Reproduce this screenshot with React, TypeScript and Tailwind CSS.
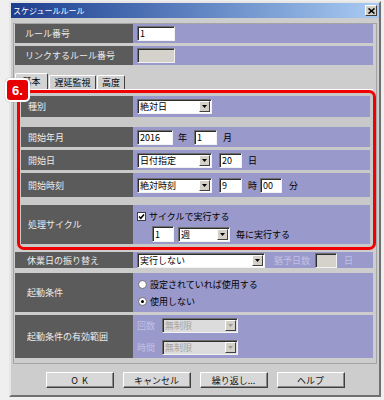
import React from 'react';

type Kids = { children?: React.ReactNode; className?: string };

function Box({ children, className = '', disabled = false }: Kids & { disabled?: boolean }) {
    return (
        <div className={`h-[15px] flex items-center pl-[2px] border border-t-[#6e6e6e] border-l-[#6e6e6e] border-r-[#f2f2f2] border-b-[#f2f2f2] shadow-[inset_1px_1px_0_#2e2e2e] text-black ${disabled ? 'bg-[#d5d2cc]' : 'bg-white'} ${className}`}>
            {children}
        </div>
    );
}

function Arrow({ disabled = false }: { disabled?: boolean }) {
    return (
        <span className="w-[11px] h-[11px] flex items-center justify-center bg-[#d4d0c8] border border-t-white border-l-white border-r-[#404040] border-b-[#404040]">
            <svg width="5" height="3" viewBox="0 0 5 3"><path d="M0 0h5L2.5 3z" fill={disabled ? '#9a9a9a' : '#000'} /></svg>
        </span>
    );
}

function Drop({ value, className = '', disabled = false }: { value: string; className?: string; disabled?: boolean }) {
    return (
        <div className={`h-[15px] flex items-center justify-between pl-[2px] pr-[1px] border border-t-[#6e6e6e] border-l-[#6e6e6e] border-r-[#f2f2f2] border-b-[#f2f2f2] shadow-[inset_1px_1px_0_#2e2e2e] ${disabled ? 'bg-[#dcdcdc] text-[#a4a4a4]' : 'bg-white text-black'} ${className}`}>
            <span>{value}</span>
            <Arrow disabled={disabled} />
        </div>
    );
}

function Row({ label, inner = false, className = '', children, pad = 'pl-[12px]' }: Kids & { label: string; inner?: boolean; pad?: string }) {
    return (
        <div className={`flex ${className}`}>
            <div className={`${inner ? 'w-[112px] pl-[7px]' : `w-[118px] ${pad}`} shrink-0 bg-[#5b5b5b] text-[#ececec] flex items-center`}>{label}</div>
            <div className="flex-1 bg-[#9999cc] pl-[4px] flex items-center text-black">{children}</div>
        </div>
    );
}

function Radio({ on = false, label }: { on?: boolean; label: string }) {
    return (
        <div className="flex items-center gap-[3px]">
            <span className="w-[9px] h-[9px] rounded-full bg-white border border-[#6e6e6e] flex items-center justify-center">
                {on && <span className="w-[3px] h-[3px] rounded-full bg-black" />}
            </span>
            <span>{label}</span>
        </div>
    );
}

function Btn({ children }: Kids) {
    return (
        <div className="w-[68px] h-[16px] bg-[#d8d8d8] border border-t-white border-l-white border-r-[#404040] border-b-[#404040] shadow-[inset_-1px_-1px_0_#8a8a8a] flex items-center justify-center text-[#111]">
            {children}
        </div>
    );
}

export default function App() {
    return (
        <div className="relative w-[384px] h-[400px] bg-[#efefef] overflow-hidden pt-[1px] pl-[9px] text-[9px] leading-none [font-family:'Noto_Sans_CJK_JP',sans-serif]">
            <div className="w-[372px] h-[396px] bg-[#cdcdcd] border-2 border-t-[#e6e6e6] border-l-[#e6e6e6] border-r-[#707070] border-b-[#707070] flex flex-col">
                {/* title bar */}
                <div className="h-[15px] flex items-center justify-between bg-gradient-to-r from-[#1d3d8f] to-[#aacbf2] pl-[2px] pr-[2px]">
                    <span className="text-white text-[8px]">スケジュールルール</span>
                    <span className="w-[12px] h-[11px] bg-[#d4d0c8] border border-t-white border-l-white border-r-[#404040] border-b-[#404040] flex items-center justify-center">
                        <svg width="7" height="6" viewBox="0 0 7 6"><path d="M0.5 0.5l6 5M6.5 0.5l-6 5" stroke="#000" strokeWidth="1.6" /></svg>
                    </span>
                </div>

                {/* group */}
                <div className="mt-[5px] mx-[2px] border border-[#a4a4a4] pl-[1px] pr-[3px] pb-[5px] flex flex-col">
                    <Row label="ルール番号" className="h-[19px]" pad="pl-[10px]">
                        <Box className="w-[38px] h-[14px]">1</Box>
                    </Row>
                    <Row label="リンクするルール番号" className="h-[19px] mt-[3px]" pad="pl-[10px]">
                        <Box className="w-[38px] h-[14px]" disabled />
                    </Row>

                    {/* tabs */}
                    <div className="mt-[7px] h-[17px] flex items-end gap-[1px]">
                        <div className="w-[33px] h-[16px] bg-[#d4d4d4] border border-b-0 border-t-white border-l-white border-r-[#404040] rounded-t-[2px] flex items-center justify-center">基本</div>
                        <div className="w-[47px] h-[14px] bg-[#d0d0d0] border border-b-0 border-t-white border-l-white border-r-[#404040] rounded-t-[2px] flex items-center justify-center">遅延監視</div>
                        <div className="w-[28px] h-[14px] bg-[#d0d0d0] border border-b-0 border-t-white border-l-white border-r-[#404040] rounded-t-[2px] flex items-center justify-center">高度</div>
                    </div>
                    <div className="h-[1px] bg-white" />

                    {/* highlighted block */}
                    <div className="ml-[2px] mr-[-3px] border-[3px] border-[#f00000] rounded-[7px] pt-[3px] pb-[3px] pl-[1px] pr-[3px] flex flex-col bg-[#c9c9c9]">
                        <Row inner label="種別" className="h-[21px]">
                            <Drop value="絶対日" className="w-[75px]" />
                        </Row>
                        <Row inner label="開始年月" className="h-[20px] mt-[10px]">
                            <Box className="w-[36px]">2016</Box>
                            <span className="ml-[5px]">年</span>
                            <Box className="w-[23px] ml-[7px]">1</Box>
                            <span className="ml-[6px]">月</span>
                        </Row>
                        <Row inner label="開始日" className="h-[20px] mt-[3px]">
                            <Drop value="日付指定" className="w-[75px]" />
                            <Box className="w-[23px] ml-[7px]">20</Box>
                            <span className="ml-[6px]">日</span>
                        </Row>
                        <Row inner label="開始時刻" className="h-[24px] mt-[3px]">
                            <Drop value="絶対時刻" className="w-[75px]" />
                            <Box className="w-[23px] ml-[7px]">9</Box>
                            <span className="ml-[6px]">時</span>
                            <Box className="w-[22px] ml-[3px]">00</Box>
                            <span className="ml-[7px]">分</span>
                        </Row>
                        <div className="flex h-[39px] mt-[8px]">
                            <div className="w-[112px] pl-[7px] shrink-0 bg-[#5b5b5b] text-[#ececec] flex items-center">処理サイクル</div>
                            <div className="flex-1 bg-[#9999cc] pl-[4px] pt-[7px] flex flex-col">
                                <div className="flex items-center gap-[3px]">
                                    <span className="w-[9px] h-[9px] bg-white border border-[#404040] flex items-center justify-center">
                                        <svg width="7" height="7" viewBox="0 0 7 7"><path d="M1 3.5l1.8 1.8L6 1.5" stroke="#000" strokeWidth="1.5" fill="none" /></svg>
                                    </span>
                                    <span>サイクルで実行する</span>
                                </div>
                                <div className="flex items-center pl-[15px] mt-[5px]">
                                    <Box className="w-[22px] h-[16px]">1</Box>
                                    <Drop value="週" className="w-[52px] ml-[4px]" />
                                    <span className="ml-[6px]">毎に実行する</span>
                                </div>
                            </div>
                        </div>
                    </div>

                    <Row label="休業日の振り替え" className="h-[16px] mt-[2px]">
                        <Drop value="実行しない" className="w-[128px] h-[14px]" />
                        <span className="ml-[9px] text-[#c2c2e2]">猶予日数</span>
                        <Box className="w-[22px] h-[14px] ml-[5px]" disabled />
                        <span className="ml-[7px] text-[#c2c2e2]">日</span>
                    </Row>
                    <div className="flex h-[39px] mt-[5px]">
                        <div className="w-[118px] pl-[12px] shrink-0 bg-[#5b5b5b] text-[#ececec] flex items-center">起動条件</div>
                        <div className="flex-1 bg-[#9999cc] pl-[5px] flex flex-col justify-center gap-[8px] text-black">
                            <Radio label="設定されていれば使用する" />
                            <Radio on label="使用しない" />
                        </div>
                    </div>
                    <div className="flex h-[43px] mt-[3px]">
                        <div className="w-[118px] pl-[12px] shrink-0 bg-[#5b5b5b] text-[#ececec] flex items-center">起動条件の有効範囲</div>
                        <div className="flex-1 bg-[#9999cc] pl-[4px] flex flex-col justify-center gap-[7px]">
                            <div className="flex items-center">
                                <span className="text-[#c2c2e2]">回数</span>
                                <Drop disabled value="無制限" className="w-[76px] h-[14px] ml-[7px]" />
                            </div>
                            <div className="flex items-center">
                                <span className="text-[#c2c2e2]">時間</span>
                                <Drop disabled value="無制限" className="w-[76px] h-[14px] ml-[7px]" />
                            </div>
                        </div>
                    </div>
                </div>

                {/* buttons */}
                <div className="mt-[8px] flex justify-center gap-[9px]">
                    <Btn><span className="tracking-[4px] pl-[4px]">OK</span></Btn>
                    <Btn>キャンセル</Btn>
                    <Btn>繰り返し...</Btn>
                    <Btn>ヘルプ</Btn>
                </div>
            </div>

            {/* step badge */}
            <div className="absolute left-[5px] top-[78px] w-[25px] h-[24px] bg-[#e60000] border-2 border-white rounded-[5px] shadow-[0_0_1px_#888] flex items-center justify-center text-white font-bold text-[13px] [font-family:'Liberation_Sans',sans-serif]">6.</div>
        </div>
    );
}
